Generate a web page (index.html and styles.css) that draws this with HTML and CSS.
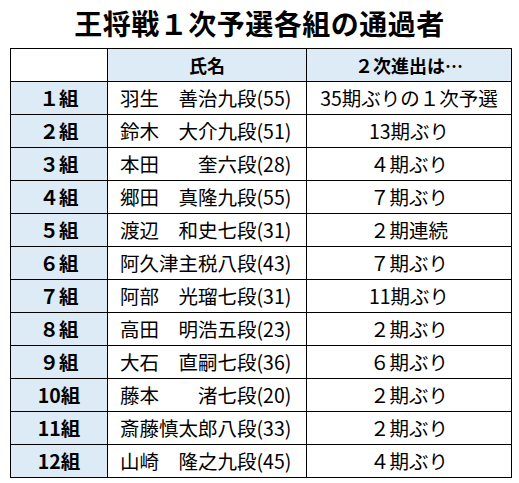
FILE: index.html
```html
<!DOCTYPE html>
<html lang="ja">
<head>
<meta charset="utf-8">
<link rel="stylesheet" href="styles.css">
</head>
<body>
<h1 class="title">王将戦１次予選各組の通過者</h1>
<table class="results">
  <colgroup>
    <col class="c-group">
    <col class="c-name">
    <col class="c-note">
  </colgroup>
  <thead>
    <tr>
      <th class="blank"></th>
      <th>氏名</th>
      <th>２次進出は…</th>
    </tr>
  </thead>
  <tbody>
    <tr><th>１組</th><td class="name">羽生　善治九段(55)</td><td class="note">35期ぶりの１次予選</td></tr>
    <tr><th>２組</th><td class="name">鈴木　大介九段(51)</td><td class="note">13期ぶり</td></tr>
    <tr><th>３組</th><td class="name">本田　　奎六段(28)</td><td class="note">４期ぶり</td></tr>
    <tr><th>４組</th><td class="name">郷田　真隆九段(55)</td><td class="note">７期ぶり</td></tr>
    <tr><th>５組</th><td class="name">渡辺　和史七段(31)</td><td class="note">２期連続</td></tr>
    <tr><th>６組</th><td class="name">阿久津主税八段(43)</td><td class="note">７期ぶり</td></tr>
    <tr><th>７組</th><td class="name">阿部　光瑠七段(31)</td><td class="note">11期ぶり</td></tr>
    <tr><th>８組</th><td class="name">高田　明浩五段(23)</td><td class="note">２期ぶり</td></tr>
    <tr><th>９組</th><td class="name">大石　直嗣七段(36)</td><td class="note">６期ぶり</td></tr>
    <tr><th>10組</th><td class="name">藤本　　渚七段(20)</td><td class="note">２期ぶり</td></tr>
    <tr><th>11組</th><td class="name">斎藤慎太郎八段(33)</td><td class="note">２期ぶり</td></tr>
    <tr><th>12組</th><td class="name">山崎　隆之九段(45)</td><td class="note">４期ぶり</td></tr>
  </tbody>
</table>
</body>
</html>
```
FILE: styles.css
```css
html, body {
  margin: 0;
  padding: 0;
  background: #ffffff;
}
body {
  font-family: "Noto Sans CJK JP", "Noto Sans", sans-serif;
  color: #000000;
}
.title {
  margin: 0;
  height: 48px;
  line-height: 47px;
  font-size: 28px;
  font-weight: 700;
  text-align: center;
  letter-spacing: 0.5px;
}
.results {
  margin-left: 10px;
  width: 501px;
  border-collapse: collapse;
  table-layout: fixed;
}
.c-group { width: 97px; }
.c-name { width: 199px; }
.c-note { width: 205px; }
.results th,
.results td {
  border: 1px solid #000000;
  height: 32px;
  padding: 0;
  line-height: 32px;
  white-space: nowrap;
  overflow: hidden;
}
.results th {
  background: #ddebf7;
  font-weight: 700;
  font-size: 19.5px;
  text-align: center;
}
.results thead th {
  font-size: 18px;
}
.results th.blank {
  background: #ffffff;
}
.results td {
  font-size: 19.5px;
  font-weight: 400;
}
.results td.name {
  text-align: left;
  padding-left: 12px;
}
.results td.note {
  text-align: center;
}
```
